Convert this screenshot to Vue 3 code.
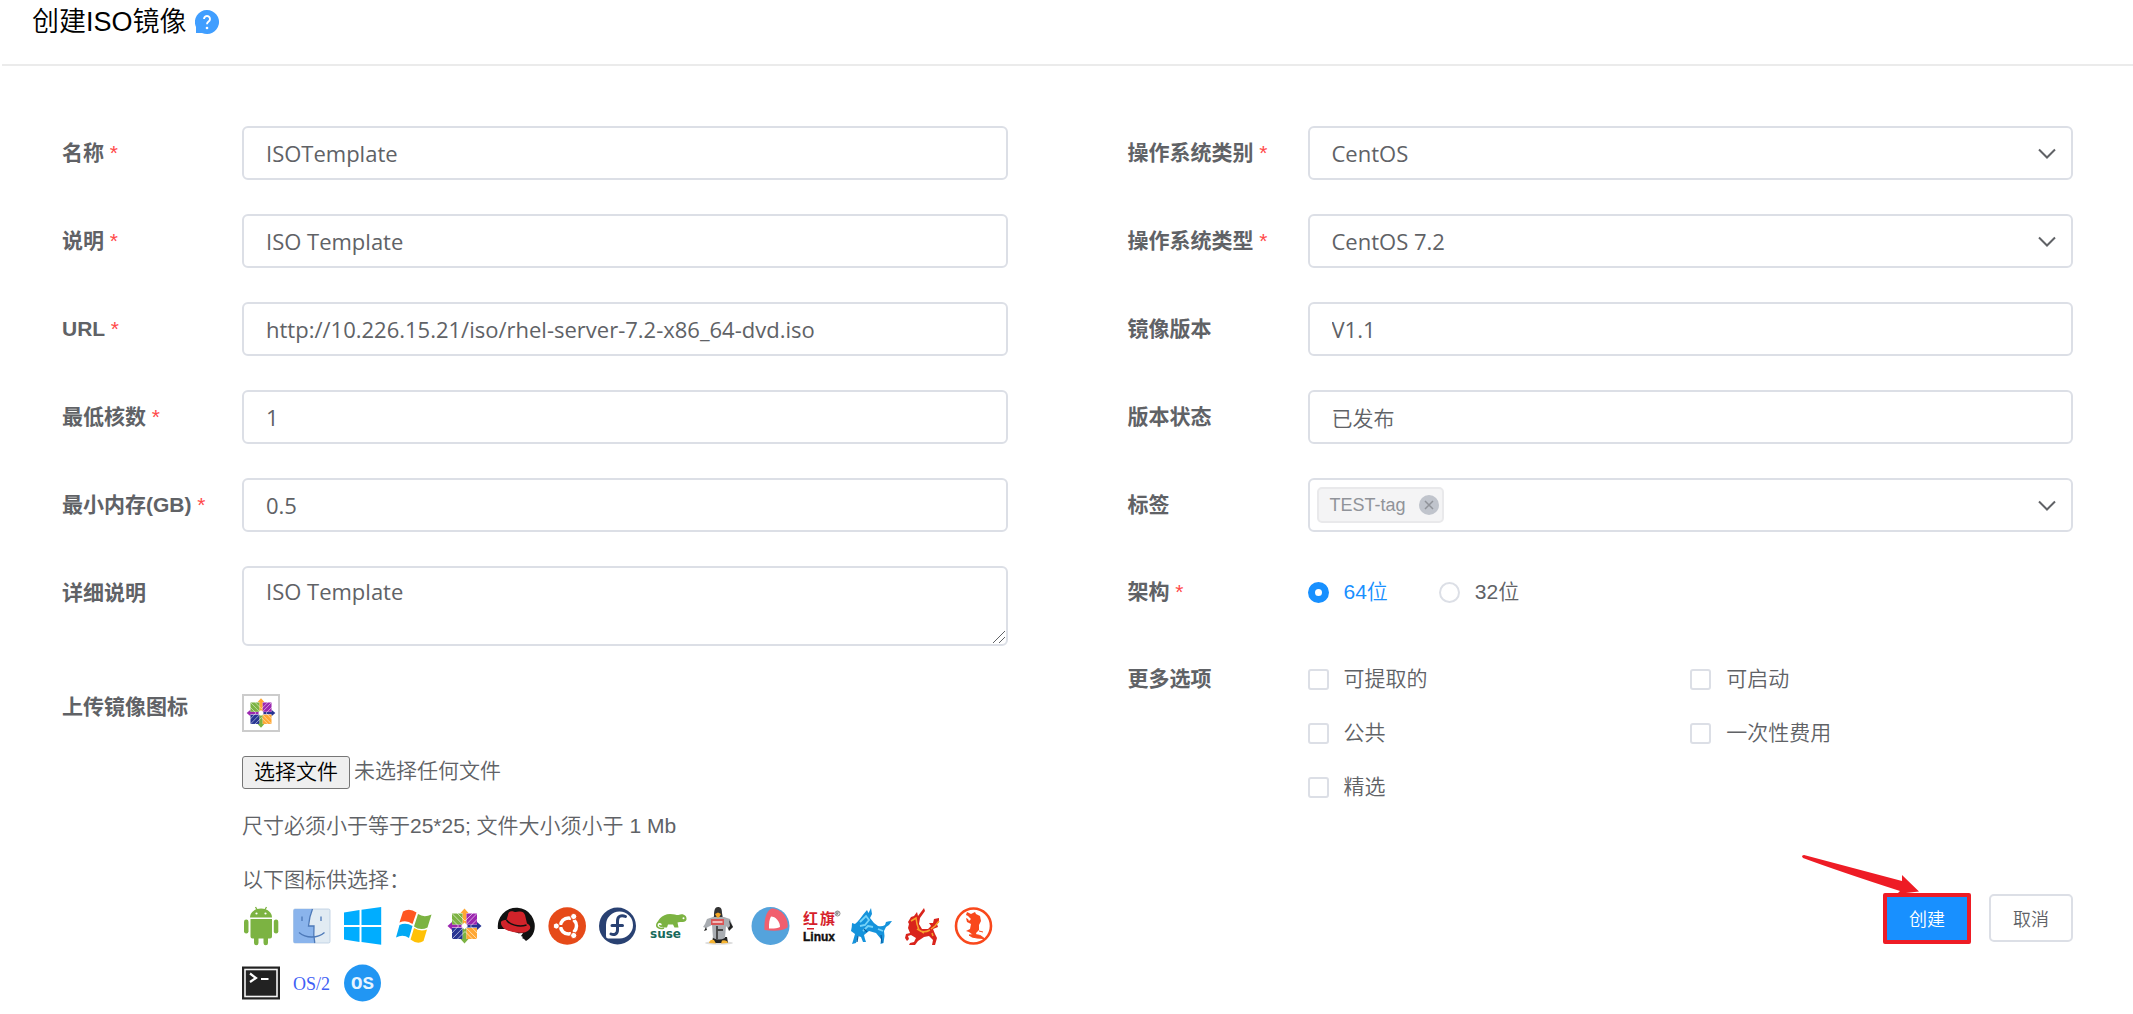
<script setup>
import { ref } from 'vue'

const leftFields = ref([
  { id: 'name', label: '名称', required: true, value: 'ISOTemplate' },
  { id: 'desc', label: '说明', required: true, value: 'ISO Template' },
  { id: 'url', label: 'URL', required: true, value: 'http://10.226.15.21/iso/rhel-server-7.2-x86_64-dvd.iso' },
  { id: 'cores', label: '最低核数', required: true, value: '1' },
  { id: 'memory', label: '最小内存(GB)', required: true, value: '0.5' }
])

const rightFields = ref([
  { id: 'os-category', label: '操作系统类别', required: true, select: true, value: 'CentOS' },
  { id: 'os-type', label: '操作系统类型', required: true, select: true, value: 'CentOS 7.2' },
  { id: 'version', label: '镜像版本', value: 'V1.1' },
  { id: 'status', label: '版本状态', value: '已发布', cjk: true }
])

const detail = ref('ISO Template')
const tags = ref(['TEST-tag'])
const arch = ref('64')
const archs = [
  { value: '64', label: '64位' },
  { value: '32', label: '32位' }
]
const options = ref([
  { id: 'extractable', label: '可提取的', checked: false },
  { id: 'bootable', label: '可启动', checked: false },
  { id: 'public', label: '公共', checked: false },
  { id: 'onetime', label: '一次性费用', checked: false },
  { id: 'featured', label: '精选', checked: false }
])

const centos = `
  <path d="M18.5 1.5l4 4.5h-2v11h-4V6h-2z" fill="#ffa733"/>
  <path d="M1.5 19l4.500-4v2.500h11v3H6V23z" fill="#9c27b0"/>
  <path d="M35.500 19l-4.500-4v2.500H20v3h11V23z" fill="#283593"/>
  <path d="M18.500 36.500l4-4.500h-2V21h-4v11h-2z" fill="#7cb342"/>
  <path d="M6 6.500h10.500v11H6z" fill="#7cb342"/><path d="M20.500 6.500H31v11H20.500z" fill="#9c27b0"/>
  <path d="M6 21h10.500v11H6z" fill="#283593"/><path d="M20.500 21H31v11H20.500z" fill="#ffa733"/>
  <path d="M6 6.500l25 25.500M31 6.500L6 32M11 6l8 8 8-8M11 32.500l8-8 8 8M5.500 12l7 7-7 7.500M31.500 12l-7 7 7 7.500" stroke="#fff" stroke-opacity="0.75" stroke-width="0.800" fill="none"/>
  <path d="M18.500 15.500l3.500 3.500-3.500 3.500L15 19z" fill="#fff"/>`

const icons = [
  { name: 'Android', art: `
    <path d="M8 10.500C8 5.500 12.500 1.500 19 1.500s11 4 11 9z" fill="#7cb342"/>
    <path d="M13.500 0l2 3.500M24.500 0l-2 3.500" stroke="#7cb342" stroke-width="1.300"/>
    <circle cx="14.500" cy="6.500" r="1.100" fill="#fff"/><circle cx="23.500" cy="6.500" r="1.100" fill="#fff"/>
    <path d="M8.500 12H30v17.500a2 2 0 0 1-2 2h-2V36a2 2 0 0 1-4.500 0v-4.500h-5V36a2 2 0 0 1-4.500 0v-4.500h-1.500a2 2 0 0 1-2-2z" fill="#7cb342"/>
    <rect x="2" y="12.500" width="4.500" height="14" rx="2.200" fill="#7cb342"/><rect x="31.800" y="12.500" width="4.500" height="14" rx="2.200" fill="#7cb342"/>` },
  { name: 'macOS', art: `
    <rect x="0.500" y="2" width="36.500" height="34" rx="1.500" fill="#e1ebf3" stroke="#b9cbe0" stroke-width="0.800"/>
    <path d="M2 2h17.500C17 8 16 13 15.500 19H21c-.5 6-.2 12 .8 17H2a1.500 1.500 0 0 1-1.500-1.500v-31A1.500 1.500 0 0 1 2 2z" fill="#8ab4ec"/>
    <path d="M19.500 2C17 8 16 13 15.500 19H21c-.5 6-.2 12 .8 17M9 9.500v4.500M28 9.500v4.500" fill="none" stroke="#4d79b8" stroke-width="1.300"/>
    <path d="M6 25.500c7 6 18.500 6 25.500 0" fill="none" stroke="#4d79b8" stroke-width="1.400"/>` },
  { name: 'Windows', art: `
    <path d="M0 5.500L15.500 3v15H0zM17.500 2.700L37.200 0v18H17.500zM0 20h15.500v15L0 32.500zM17.500 20h19.700v17.800L17.500 35z" fill="#00adff"/>` },
  { name: 'Windows 7', art: `
    <path d="M8 4.500q6.500-4 13.500 1L17.500 17q-6-4.500-13-1.500z" fill="#ff5722"/>
    <path d="M23 7q6 4 13.500.500L32.500 20.500q-7 3.500-13.500-1z" fill="#7cb342"/>
    <path d="M4.500 18q6.500-3 13 1L14 31q-6-4-13-.500z" fill="#03a9f4"/>
    <path d="M19 21q6 4 13 1.500L28.500 34q-6 4-13-1.500z" fill="#ffc107"/>` },
  { name: 'CentOS', art: centos },
  { name: 'Red Hat', art: `
    <path d="M1 22a18.500 18.500 0 1 1 36 2.500c-1 4-4 7-8 9.500l-2-2c-3-1-5-3-6-6L8 22z" fill="#111"/>
    <path d="M2 24l5-2 8 5 11-1-2 3 2 1-3 3 1 1-3-1-5-1-5-4-8 1z" fill="#fff"/>
    <path d="M4 15c-.5 5 5 8.500 12 10s13 1 16-2c2.500-2.500 1-5-2-6.500L28 8c-1-3-3.500-4-6-3.500-2 .2-3 1-5 .2C13 3.500 11.500 5 11 8l-1.500 5C7 13 4.500 13.500 4 15z" fill="#d2232a"/>
    <path d="M9.500 13c3 4.500 12 7.500 20 5" fill="none" stroke="#111" stroke-width="1.500"/>` },
  { name: 'Ubuntu', art: `
    <circle cx="19.200" cy="19" r="18.800" fill="#e64a19"/>
    <circle cx="20.500" cy="19" r="8" fill="none" stroke="#fff" stroke-width="3.500"/>
    <path d="M20.500 19L5 19M20.500 19L28 5.500M20.500 19L28 32.500" stroke="#e64a19" stroke-width="2.200"/>
    <circle cx="20.500" cy="19" r="5.500" fill="#e64a19"/>
    <g fill="#fff" stroke="#e64a19"><circle cx="8.300" cy="19" r="3.100"/><circle cx="25.700" cy="9.500" r="3.100"/><circle cx="25.700" cy="28.500" r="3.100"/></g>` },
  { name: 'Fedora', art: `
    <circle cx="18.500" cy="19" r="18.500" fill="#294172"/>
    <path d="M7 29V18A13.500 13.500 0 1 1 20.500 31.500H9A2.300 2.300 0 0 1 7 29z" fill="#fff"/>
    <path d="M26.500 9.500c-4.500-2-8 0-8 4.500v9c0 4-3.500 5.500-6.500 4M13 18.500h10.500" fill="none" stroke="#294172" stroke-width="3" stroke-linecap="round"/>` },
  { name: 'SUSE', art: `
    <path d="M7 20c-1-6 5-13 13-13 5 0 7 1.500 8.500 1 5-2 8.500 1 8 4.500-.5 3.500-6 2-9 3l1 5h-4l-1.500-3h-5l-1 3h-4z" fill="#7cb342"/>
    <path d="M14 21c-5 1.500-8-1-7-4s5.500-2 5.500.5-3 1.800-2.800.3" fill="#fff" stroke="#7cb342" stroke-width="1.600"/>
    <circle cx="33.500" cy="11.300" r="1" fill="#fff"/>
    <text x="0" y="31" font-family="DejaVu Sans" font-weight="700" font-size="12" fill="#17695b">suse</text>` },
  { name: 'Oracle Linux', art: `
    <ellipse cx="18" cy="36" rx="14" ry="1.800" fill="#ddd"/>
    <path d="M12 30h14l1 6H11z" fill="#222"/>
    <path d="M13 9c0-6 1-9 4-9s4 2 4 6l1 6H12z" fill="#333"/>
    <path d="M4 17l2-5 6-2h11l6 2 3 8-4 3-3-4-1 12q-6 3-12 0l-1-13-6 3-3-1z" fill="#a9adb2"/>
    <path d="M5 20l-2 4 3-1zM28 13l4 7-4 4-1-3 2-2z" fill="#222"/>
    <path d="M10 12h13v6H10z" fill="#d95555"/><path d="M11.500 15h10" stroke="#fff" stroke-width="1.200"/>
    <path d="M16 19v13M16 23h6" stroke="#444" stroke-width="1.800"/>
    <path d="M14 7l3-1.500L20 7l-2 3.500h-2z" fill="#f5a623"/>
    <path d="M8 36q1-4 5-3l2 3.500zM20 36.500l1-3q5-1 6 2.500z" fill="#f5b331"/>` },
  { name: 'CoreOS', art: `
    <circle cx="18.500" cy="19" r="19" fill="#54a3dc"/>
    <path d="M12.500 23C12 13 14 4 19.500 1.500 30 1.500 37 12 35.500 20.500 31 24 22 24.500 12.500 23z" fill="#f15f6e"/>
    <path d="M17 21.500c-.3-5 .5-9.500 2-12 4.500 0 9 5 9 10.500-3 1.500-7 1.700-11 1.500z" fill="#fff"/>` },
  { name: '红旗 Linux', art: `
    <text x="0" y="17" font-family="Noto Sans CJK SC" font-weight="700" font-size="15" fill="#d61f2c">红</text>
    <text x="17" y="17" font-family="Noto Sans CJK SC" font-weight="700" font-size="15" fill="#d61f2c">旗</text>
    <circle cx="34.500" cy="6.500" r="2.500" fill="none" stroke="#555" stroke-width="0.700"/><path d="M33.700 8V5h1.500v1.500h-1.500l1.500 1.500" fill="none" stroke="#555" stroke-width="0.600"/>
    <path d="M4 21h7v1.500H4z" fill="#d61f2c"/>
    <text x="0" y="34" font-family="Liberation Sans" font-weight="700" font-size="12" fill="#111" stroke="#111" stroke-width="0.400">Linux</text>` },
  { name: '麒麟', art: `
    <path d="M1 17c3-2 6-7 12-14l1.500 3L17 1l1 6-2 4 4 5 4 3q4 1 7-1l1-3q3-1 6-1l-3 4-3 2-2 4 .5 5-1 7-3 1 .5-5-5-6-7-2-5 4 1 4 1 3h-3l-2-5-3-1-2 7-4 1 1-3 2-7-4-3q1-4 1-8z" fill="#1593dc"/>
    <path d="M6 15l6-6 3 4-4 5-5 1M9 24l5-5 5 1M24 22l5 2" fill="none" stroke="#76d3f8" stroke-width="1.800"/>
    <path d="M4 29l-1 6M27 28l1 8M10 22l3 3" stroke="#0b5c9e" stroke-width="1.200" fill="none"/>` },
  { name: '中标麒麟', art: `
    <path d="M3 15l3-5 3-1 3-4 1 4 6-8 1 3-5 7-1 6 3 5 6 0 3-3-2-3 4 0 1-4 5-1v4l-2 2 1 3-5 2 2 5 2 4-2 7h-3l1-5-4-4-5 1-6 4-3 4-6 0 1-2 4-1 2-4-5-3-3 1 1 3-2 2-2-3 1-4 4-1-2-5 1-4z" fill="#d9241c"/>
    <path d="M6 14l5-3 1 6 2 6 5 3M26 22l4-3 4-5M12 22q6 5 13 1M28 29l-1-3" fill="none" stroke="#f9a02c" stroke-width="1.500"/>` },
  { name: '银河麒麟', art: `
    <circle cx="17.500" cy="19" r="17.500" fill="#fff" stroke="#f9481c" stroke-width="2.600"/>
    <path d="M11 5l4 2 4-2 1 2 4 2 1 5-2 4 0 5-3 3 1 3-4-1-4-3-3-1 4-2 1-5-4-2-1-4 2 1 1 2 2-2-3-3-2-1z" fill="#f9481c"/>
    <path d="M13 28q9-1 12 1l4 3q-4-1-8-1l-5-1zM23 24l4 1" fill="#f9481c" stroke="#f9481c"/>` },
  { name: 'Terminal', art: `
    <rect x="0" y="1.500" width="38" height="33" fill="#222"/><rect x="3" y="4.500" width="32" height="27" fill="none" stroke="#f5f5f5" stroke-width="1.600"/>
    <path d="M8 8.500l6 4.500-6 4M19 14h7.500" fill="none" stroke="#fff" stroke-width="2.200"/>` },
  { name: 'OS/2', art: `<text x="0" y="25" font-family="Liberation Serif" font-weight="400" font-size="18" fill="#3f5ff5">OS/2</text>` },
  { name: 'OS', art: `
    <circle cx="18.500" cy="18" r="18.500" fill="#2196f3"/>
    <text x="18.500" y="24" text-anchor="middle" font-family="Liberation Mono" font-weight="700" font-size="19" fill="#e8f4ff">OS</text>` }
]

const currentArt = ref(centos)
const fileInput = ref(null)
</script>

<template>
  <div class="page">
    <header class="page-head">
      <h1>创建ISO镜像</h1>
      <button class="help" type="button" aria-label="帮助">
        <svg viewBox="0 0 24 24">
          <path d="M12 0a12 12 0 1 1-5 22.900L1 23V17A12 12 0 0 1 12 0z" fill="#409eff" />
          <path d="M9 9a3 3 0 1 1 4.500 2.600c-1 .6-1.500 1.100-1.500 2.700" fill="none" stroke="#fff" stroke-width="1.900" />
          <circle cx="12" cy="18" r="1.300" fill="#fff" />
        </svg>
      </button>
    </header>

    <form class="form" @submit.prevent>
      <div class="col">
        <div v-for="f in leftFields" :key="f.id" class="row">
          <label class="label" :for="f.id">{{ f.label }} <span v-if="f.required" class="star">*</span></label>
          <input :id="f.id" v-model="f.value" class="control" type="text" />
        </div>
        <div class="row">
          <label class="label" for="detail">详细说明</label>
          <div class="picker">
            <textarea id="detail" v-model="detail" class="control area"></textarea>
            <svg class="grip" viewBox="0 0 12 12"><path d="M0 12L12 0M6 12l6-6" /></svg>
          </div>
        </div>
        <div class="row">
          <label class="label" for="icon-file">上传镜像图标</label>
          <div class="upload">
            <svg class="preview" viewBox="0 0 37 38" v-html="currentArt"></svg>
            <div class="file">
              <button type="button" class="file-btn" @click="fileInput.click()">选择文件</button>
              <span>未选择任何文件</span>
              <input id="icon-file" ref="fileInput" type="file" hidden />
            </div>
            <p>尺寸必须小于等于25*25; 文件大小须小于 1 Mb</p>
            <p>以下图标供选择：</p>
            <div class="icons">
              <button v-for="i in icons" :key="i.name" type="button" :aria-label="i.name" @click="currentArt = i.art">
                <svg viewBox="0 0 38 38" v-html="i.art"></svg>
              </button>
            </div>
          </div>
        </div>
      </div>

      <div class="col">
        <div v-for="f in rightFields" :key="f.id" class="row">
          <label class="label" :for="f.id">{{ f.label }} <span v-if="f.required" class="star">*</span></label>
          <div v-if="f.select" class="picker">
            <select :id="f.id" v-model="f.value" class="control">
              <option>{{ f.value }}</option>
            </select>
            <svg class="chevron" viewBox="0 0 18 12"><path d="M1 1.500l8 8 8-8" /></svg>
          </div>
          <input v-else :id="f.id" v-model="f.value" class="control" :class="{ cjk: f.cjk }" type="text" />
        </div>
        <div class="row">
          <label class="label" for="tags">标签</label>
          <div class="picker tagbox">
            <span v-for="t in tags" :key="t" class="tag">
              {{ t }}
              <button type="button" :aria-label="'移除 ' + t" @click="tags = tags.filter(x => x !== t)">
                <svg viewBox="0 0 20 20"><path d="M6 6l8 8M14 6l-8 8" /></svg>
              </button>
            </span>
            <input id="tags" class="tag-input" type="text" />
            <svg class="chevron" viewBox="0 0 18 12"><path d="M1 1.500l8 8 8-8" /></svg>
          </div>
        </div>
        <div class="row arch">
          <span class="label">架构 <span class="star">*</span></span>
          <div class="radios" role="radiogroup" aria-label="架构">
            <label v-for="a in archs" :key="a.value" :class="{ on: arch === a.value }">
              <input v-model="arch" type="radio" name="arch" :value="a.value" />{{ a.label }}
            </label>
          </div>
        </div>
        <div class="row">
          <span class="label">更多选项</span>
          <div class="checks">
            <label v-for="o in options" :key="o.id">
              <input v-model="o.checked" type="checkbox" />{{ o.label }}
            </label>
          </div>
        </div>
        <div class="actions">
          <div class="marked">
            <button type="submit" class="btn primary">创建</button>
            <span class="mark"></span>
            <svg class="arrow" viewBox="0 0 120 40">
              <path d="M1 1.500Q1 0 3 0L101 26V20L118 36.500 96 39 99 36Q40 17 2 3z" fill="#ee1c25" />
            </svg>
          </div>
          <button type="button" class="btn">取消</button>
        </div>
      </div>
    </form>
  </div>
</template>

<style>
body {
  margin: 0;
  background: #fff;
}
</style>

<style scoped>
.page,
.page * {
  box-sizing: border-box;
}
.page {
  font-family: "Liberation Sans", "Noto Sans CJK SC", sans-serif;
  font-size: 21px;
  font-weight: 350;
  color: #606266;
}
.page button,
.page input,
.page select,
.page textarea {
  font: inherit;
  color: inherit;
}
.page-head {
  display: flex;
  align-items: center;
  gap: 8px;
  height: 66px;
  margin-left: 2px;
  padding: 0 30px 20px;
  border-bottom: 2px solid #ebebeb;
}
.page-head h1 {
  margin: 0;
  font-size: 27px;
  line-height: 42px;
  font-weight: 350;
  color: #000;
}
.help {
  width: 24px;
  height: 24px;
  padding: 0;
  border: 0;
  background: none;
}
.page svg {
  display: block;
}
.form {
  display: grid;
  grid-template-columns: 1fr 1fr;
  column-gap: 120px;
  padding: 60px 60px 0 62px;
}
.col {
  display: flex;
  flex-direction: column;
  gap: 34px;
  min-width: 0;
}
.row {
  display: grid;
  grid-template-columns: 180px 1fr;
  align-items: start;
}
.label {
  line-height: 54px;
  font-weight: 700;
}
.star {
  color: #ff4949;
  font-weight: 400;
}
.page .control {
  display: block;
  width: 100%;
  height: 54px;
  margin: 0;
  padding: 0 22px;
  border: 2px solid #dcdfe6;
  border-radius: 6px;
  outline: 0;
  background: #fff;
  appearance: none;
  font-family: "Open Sans", "Noto Sans CJK SC", sans-serif;
  font-size: 22px;
  font-weight: 400;
}
.page .control.cjk {
  font-family: "Noto Sans CJK SC", sans-serif;
  font-size: 21px;
  font-weight: 350;
}
.page .control.area {
  height: 80px;
  padding: 8px 22px;
  line-height: 30px;
  resize: vertical;
}
.control.area::-webkit-resizer {
  background: transparent;
}
.grip {
  position: absolute;
  right: 3px;
  bottom: 3px;
  width: 12px;
  height: 12px;
  stroke: #606266;
  stroke-width: 1;
  pointer-events: none;
}
.picker {
  position: relative;
}
.chevron {
  position: absolute;
  right: 17px;
  top: 22px;
  width: 18px;
  height: 12px;
  fill: none;
  stroke: #606266;
  stroke-width: 2;
  pointer-events: none;
}
.tagbox {
  display: flex;
  align-items: center;
  height: 54px;
  padding: 0 50px 0 7px;
  border: 2px solid #dcdfe6;
  border-radius: 6px;
}
.tagbox .chevron {
  right: 15px;
  top: 20px;
}
.tag {
  display: flex;
  align-items: center;
  gap: 13px;
  height: 36px;
  padding: 0 3px 0 11px;
  border: 2px solid #e9e9eb;
  border-radius: 5px;
  background: #f4f4f5;
  color: #909399;
  font-size: 18px;
}
.tag button {
  width: 20px;
  height: 20px;
  padding: 0;
  border: 0;
  border-radius: 50%;
  background: #c0c4cc;
}
.tag path {
  stroke: #909399;
  stroke-width: 1.5;
}
.tag-input {
  flex: 1;
  min-width: 0;
  border: 0;
  outline: 0;
  background: none;
}
.upload {
  padding-top: 14px;
}
.preview {
  width: 38px;
  height: 38px;
  padding: 1px;
  border: 2px solid #ccc;
}
.file {
  display: flex;
  align-items: flex-start;
  gap: 4px;
  height: 33px;
  margin-top: 24px;
  line-height: 30px;
}
.page .file-btn {
  height: 33px;
  padding: 0 11px 2px;
  border: 1px solid #767676;
  border-radius: 3px;
  background: #efefef;
  color: #000;
}
.upload p {
  margin: 0;
  line-height: 54px;
}
.file + p {
  padding-top: 10px;
}
.icons {
  display: flex;
  flex-wrap: wrap;
  gap: 20px 13px;
}
.icons button {
  width: 38px;
  height: 38px;
  padding: 0;
  border: 0;
  background: none;
}
.icons svg {
  overflow: visible;
}
.arch .label,
.radios {
  line-height: 52px;
}
.radios {
  display: flex;
  gap: 51px;
}
.radios label,
.checks label {
  display: flex;
  align-items: center;
  gap: 15px;
}
.radios .on {
  color: #1890ff;
}
.radios input,
.checks input {
  width: 21px;
  height: 21px;
  margin: 0;
  border: 2px solid #dcdfe6;
  border-radius: 50%;
  background: #fff;
  appearance: none;
}
.radios input:checked {
  border: 7px solid #1890ff;
}
.checks input {
  border-radius: 3px;
}
.checks input:checked {
  background: #1890ff;
}
.checks {
  display: grid;
  grid-template-columns: 1fr 1fr;
  line-height: 54px;
}
.actions {
  display: flex;
  justify-content: flex-end;
  gap: 20px;
  margin-top: 46px;
}
.page .btn {
  display: block;
  width: 84px;
  height: 48px;
  padding: 0;
  border: 2px solid #dcdfe6;
  border-radius: 5px;
  background: #fff;
  font-size: 18px;
}
.page .btn.primary {
  border-color: #1890ff;
  background: #1890ff;
  color: #fff;
}
.marked {
  position: relative;
}
.mark {
  position: absolute;
  inset: -1px -2px -2px;
  border: 4px solid #ee1c25;
  border-radius: 2px;
  pointer-events: none;
}
.arrow {
  position: absolute;
  right: 48px;
  bottom: 47px;
  width: 120px;
  height: 40px;
  pointer-events: none;
}
</style>
